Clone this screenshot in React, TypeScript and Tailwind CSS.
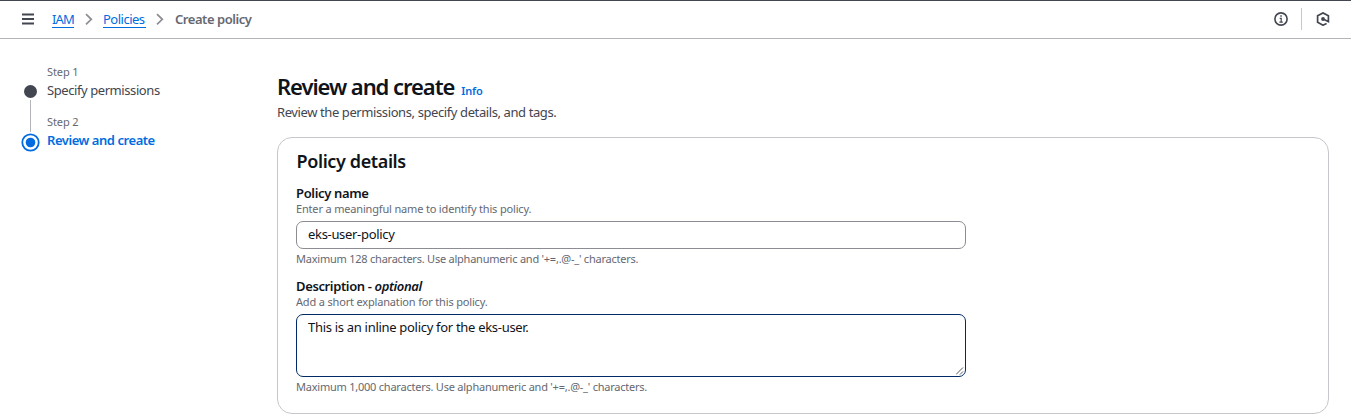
import React from "react";

function Chevron() {
  return (
    <svg className="h-[13px] w-[8px] shrink-0" viewBox="0 0 8 13" fill="none" stroke="#8c8c94" strokeWidth="1.7">
      <path d="M1 1.2 6.3 6.3 1 11.4" />
    </svg>
  );
}

function TopBar() {
  return (
    <header className="flex h-[39px] items-center border-t border-b border-t-[#424650] border-b-[#b4b4bb] pl-[22px] pr-[21px] text-[13px] leading-[18px]">
      <svg className="-mt-[2px] h-[12px] w-[12px] shrink-0" viewBox="0 0 12 12" stroke="#424650" strokeWidth="1.8">
        <path d="M0 1.5h12M0 6h12M0 10.5h12" />
      </svg>
      <nav className="ml-[18px] -mt-px flex items-center">
        <a className="h-[17px] w-[22px] whitespace-nowrap border-b border-[#006ce0] leading-[17px] tracking-[-0.8px] text-[#006ce0]">IAM</a>
        <span className="ml-[11px] flex"><Chevron /></span>
        <a className="ml-[10px] h-[17px] w-[43px] whitespace-nowrap border-b border-[#006ce0] leading-[17px] tracking-[-0.5px] text-[#006ce0]">Policies</a>
        <span className="ml-[10px] flex"><Chevron /></span>
        <span className="ml-[11px] whitespace-nowrap font-semibold tracking-[-0.45px] text-[#656871]">Create policy</span>
      </nav>
      <div className="ml-auto -mt-px flex items-center">
        <svg className="h-[14px] w-[14px]" viewBox="0 0 14 14" fill="none" stroke="#424650">
          <circle cx="7" cy="7" r="6.1" strokeWidth="1.6" />
          <path d="M5.7 6.4h1.5v3.5M5.4 10.1h3.4" strokeWidth="1.2" />
          <path d="M6.3 4h1.5" strokeWidth="1.5" />
        </svg>
        <span className="ml-[13px] h-[22px] w-px bg-[#c6c6cd]" />
        <svg className="ml-[14px] h-[14px] w-[14px]" viewBox="0 0 14 14" fill="none" stroke="#424650">
          <path d="M10.6 11.4 7 13.2 1.6 10.2V3.8L7 .9l5.4 2.9v5.9L7.2 7" strokeWidth="1.7" />
          <circle cx="7" cy="7" r="1.9" fill="#424650" stroke="none" />
        </svg>
      </div>
    </header>
  );
}

function Steps() {
  return (
    <aside className="flex w-[278px] shrink-0 pl-[21px] pt-[24px]">
      <div className="flex w-[19px] flex-col items-center pt-[22px]">
        <span className="h-[13px] w-[13px] rounded-full bg-[#424650]" />
        <span className="mt-[2px] h-[32px] w-px bg-[#b4b4bb]" />
        <svg className="mt-px h-[19px] w-[19px] shrink-0" viewBox="0 0 19 19">
          <circle cx="9.5" cy="9.5" r="8.2" fill="none" stroke="#006ce0" strokeWidth="1.8" />
          <circle cx="9.5" cy="9.5" r="4.8" fill="#006ce0" />
        </svg>
      </div>
      <div className="ml-[7px] flex flex-col whitespace-nowrap text-[13px]">
        <span className="h-[18px] text-[11px] leading-[18px] tracking-[-0.1px] text-[#656871]">Step 1</span>
        <span className="h-[18px] leading-[18px] tracking-[-0.42px] text-[#424650]">Specify permissions</span>
        <span className="mt-[14px] h-[18px] text-[11px] leading-[18px] tracking-[-0.1px] text-[#656871]">Step 2</span>
        <span className="h-[18px] font-semibold leading-[18px] tracking-[-0.45px] text-[#006ce0]">Review and create</span>
      </div>
    </aside>
  );
}

function Details() {
  return (
    <section className="mt-[15px] flex h-[277px] w-[1052px] flex-col whitespace-nowrap rounded-[15px] border border-[#c6c6cd] pl-[18px] pt-[11px]">
      <h2 className="h-[24px] pl-[0.5px] text-[18px] font-semibold leading-[24px] tracking-[-0.38px]">Policy details</h2>
      <label className="mt-[11px] h-[18px] text-[13px] font-semibold leading-[18px] tracking-[-0.35px]">Policy name</label>
      <p className="h-[14px] text-[11px] leading-[14px] tracking-[-0.17px] text-[#656871]">Enter a meaningful name to identify this policy.</p>
      <div className="mt-[5px] flex h-[28px] w-[670px] items-center rounded-[7px] border border-[#8c8c94] pb-[2px] pl-[11px] text-[13px] leading-[18px] tracking-[-0.32px]">eks-user-policy</div>
      <p className="mt-[3px] h-[14px] text-[11px] leading-[14px] tracking-[-0.23px] text-[#656871]">Maximum 128 characters. Use alphanumeric and '+=,.@-_' characters.</p>
      <label className="mt-[11px] h-[18px] text-[13px] font-semibold leading-[18px] tracking-[-0.37px]">Description - <i>optional</i></label>
      <p className="h-[14px] text-[11px] leading-[14px] tracking-[-0.17px] text-[#656871]">Add a short explanation for this policy.</p>
      <div className="mt-[5px] flex h-[63px] w-[670px] justify-between rounded-[7px] border border-[#002b66] pl-[11px] pt-[3px] text-[13px] leading-[18px] tracking-[-0.3px]">
        <span>This is an inline policy for the eks-user.</span>
        <svg className="mr-px mb-px h-[8px] w-[8px] self-end" viewBox="0 0 8 8" stroke="#424650" strokeWidth="0.9">
          <path d="M0 7.5 7 .5M4 7.5 7 4.5" />
        </svg>
      </div>
      <p className="mt-[3px] h-[14px] text-[11px] leading-[14px] tracking-[-0.23px] text-[#656871]">Maximum 1,000 characters. Use alphanumeric and '+=,.@-_' characters.</p>
    </section>
  );
}

export default function App() {
  return (
    <div className="h-[418px] overflow-hidden bg-white font-['Noto_Sans',sans-serif] text-[#0f141a]">
      <TopBar />
      <div className="flex">
        <Steps />
        <main className="-ml-px flex flex-col whitespace-nowrap pt-[32px]">
          <div className="flex h-[32px] items-baseline leading-[30px]">
            <h1 className="text-[22px] font-semibold tracking-[-1.06px]">Review and create</h1>
            <a className="ml-[7px] text-[11px] font-semibold tracking-[-0.2px] text-[#006ce0]">Info</a>
          </div>
          <p className="h-[19px] text-[13px] leading-[19px] tracking-[-0.4px] text-[#424650]">Review the permissions, specify details, and tags.</p>
          <Details />
        </main>
      </div>
    </div>
  );
}
